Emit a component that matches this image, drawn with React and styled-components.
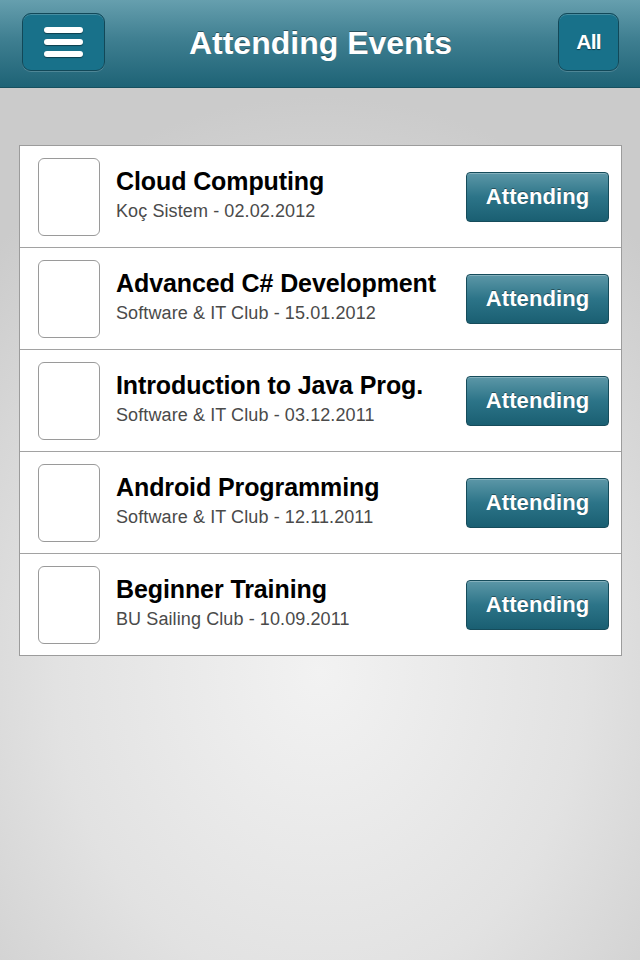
import React from 'react'
import styled, { createGlobalStyle } from 'styled-components'

const GlobalStyle = createGlobalStyle`
  html, body {
    margin: 0;
    padding: 0;
  }
  body {
    font-family: 'Liberation Sans', Arial, sans-serif;
    -webkit-font-smoothing: antialiased;
  }
`

const Screen = styled.div`
  width: 640px;
  height: 960px;
  display: flex;
  flex-direction: column;
  overflow: hidden;
  background: radial-gradient(ellipse 75% 60% at 50% 70%, #f2f2f2 0%, #e2e2e2 55%, #cbcbcb 100%);
`

const NavBar = styled.header`
  height: 88px;
  flex-shrink: 0;
  box-sizing: border-box;
  display: grid;
  grid-template-columns: 1fr auto 1fr;
  align-items: center;
  padding: 0 21px 4px 22px;
  background: linear-gradient(to bottom, #669fae 0%, #3f7f91 45%, #1e6376 100%);
  border-bottom: 1px solid #17505f;
`

const NavButton = styled.button`
  justify-self: ${p => p.side};
  width: ${p => p.w}px;
  height: 58px;
  box-sizing: border-box;
  display: flex;
  align-items: center;
  justify-content: center;
  border-radius: 9px;
  border: 1px solid #124858;
  background: #18718a;
  box-shadow: inset 0 1px 0 rgba(255, 255, 255, 0.2), 0 1px 0 rgba(255, 255, 255, 0.18);
  color: #fff;
  font-family: 'Liberation Sans', Arial, sans-serif;
  font-weight: bold;
  font-size: 21px;
  letter-spacing: -0.8px;
  text-shadow: 0 1px 1px rgba(0, 0, 0, 0.5);
  padding: 0;
`

const MenuBars = styled.div`
  display: flex;
  flex-direction: column;
  gap: 6px;

  span {
    display: block;
    width: 39px;
    height: 6px;
    border-radius: 3px;
    background: #fff;
    box-shadow: 0 1px 1px rgba(0, 0, 0, 0.45);
  }
`

const Title = styled.h1`
  margin: 0 0 -4px 0;
  color: #fff;
  font-size: 32px;
  font-weight: bold;
  letter-spacing: 0;
  text-shadow: 0 -1px 0 rgba(0, 0, 0, 0.4);
`

const Content = styled.main`
  padding: 57px 18px 0 19px;
`

const List = styled.ul`
  list-style: none;
  margin: 0;
  padding: 0;
  background: #fff;
  border: 1px solid #9c9c9c;
`

const Row = styled.li`
  height: 101px;
  display: flex;
  align-items: center;
  padding: 0 12px 0 18px;
  border-top: ${p => (p.first ? 'none' : '1px solid #a2a2a2')};
`

const Thumb = styled.div`
  width: 62px;
  height: 78px;
  box-sizing: border-box;
  border: 1px solid #9a9a9a;
  border-radius: 6px;
  background: #fff;
  flex-shrink: 0;
`

const Info = styled.div`
  flex: 1;
  display: flex;
  flex-direction: column;
  padding-left: 16px;
  margin-top: -4px;
`

const EventName = styled.div`
  font-size: 25px;
  font-weight: bold;
  color: #000;
  letter-spacing: -0.1px;
`

const EventMeta = styled.div`
  margin-top: 5px;
  font-size: 18px;
  color: #4a4a4a;
  letter-spacing: 0.1px;
`

const AttendButton = styled.button`
  width: 143px;
  height: 50px;
  box-sizing: border-box;
  border-radius: 4px;
  border: 1px solid #164c5b;
  background: linear-gradient(to bottom, #5c97a7 0%, #2c7488 50%, #1a5f72 100%);
  box-shadow: inset 0 1px 0 rgba(255, 255, 255, 0.25);
  color: #fff;
  font-family: 'Liberation Sans', Arial, sans-serif;
  font-weight: bold;
  font-size: 22px;
  letter-spacing: 0.1px;
  text-shadow: 0 -1px 0 rgba(0, 0, 0, 0.4);
  padding: 0;
  flex-shrink: 0;
`

const events = [
  { name: 'Cloud Computing', meta: 'Koç Sistem - 02.02.2012' },
  { name: 'Advanced C# Development', meta: 'Software & IT Club - 15.01.2012' },
  { name: 'Introduction to Java Prog.', meta: 'Software & IT Club - 03.12.2011' },
  { name: 'Android Programming', meta: 'Software & IT Club - 12.11.2011' },
  { name: 'Beginner Training', meta: 'BU Sailing Club - 10.09.2011' }
]

const App = () => (
  <Screen>
    <GlobalStyle />
    <NavBar>
      <NavButton w={83} side="start" aria-label="Menu">
        <MenuBars>
          <span />
          <span />
          <span />
        </MenuBars>
      </NavButton>
      <Title>Attending Events</Title>
      <NavButton w={61} side="end">All</NavButton>
    </NavBar>
    <Content>
      <List>
        {events.map((e, i) => (
          <Row key={e.name} first={i === 0}>
            <Thumb />
            <Info>
              <EventName>{e.name}</EventName>
              <EventMeta>{e.meta}</EventMeta>
            </Info>
            <AttendButton>Attending</AttendButton>
          </Row>
        ))}
      </List>
    </Content>
  </Screen>
)

export default App
